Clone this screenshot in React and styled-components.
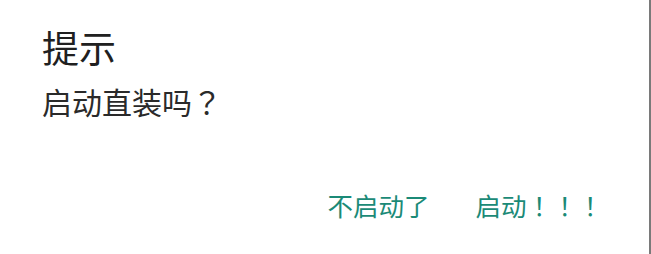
import styled, { createGlobalStyle } from "styled-components";

const GlobalStyle = createGlobalStyle`
    html, body {
        margin: 0;
        padding: 0;
        background: #ffffff;
    }
    body {
        font-family: "Noto Sans CJK SC", "Noto Sans", sans-serif;
    }
`

const Dialog = styled.section`
    width: 651px;
    height: 254px;
    box-sizing: border-box;
    background: #ffffff;
    border-right: 2px solid #7a7a7a;
    display: flex;
    flex-direction: column;
    padding: 23px 0 0 42px;
`

const Title = styled.h2`
    margin: 0;
    font-size: 37px;
    font-weight: 400;
    line-height: 48px;
    color: #202020;
`

const Message = styled.p`
    margin: 10px 0 0;
    font-size: 30px;
    line-height: 40px;
    color: #2a2a2a;
`

/* full-width punctuation sits centred in its cell in the reference */
const Punct = styled.span`
    font-family: "Noto Sans CJK TC", "Noto Sans CJK SC", sans-serif;
`

const Actions = styled.div`
    margin-top: auto;
    display: flex;
    justify-content: flex-end;
    gap: 46px;
    padding: 0 46px 32px 0;
`

const ActionButton = styled.button`
    border: none;
    background: transparent;
    padding: 0;
    font-family: inherit;
    font-size: 25.5px;
    line-height: 34px;
    color: #1b8a77;
    cursor: pointer;
`

export default function App() {
    return (
        <>
            <GlobalStyle />
            <Dialog>
                <Title>提示</Title>
                <Message>启动直装吗<Punct>？</Punct></Message>
                <Actions>
                    <ActionButton>不启动了</ActionButton>
                    <ActionButton>启动<Punct>！！！</Punct></ActionButton>
                </Actions>
            </Dialog>
        </>
    )
}
